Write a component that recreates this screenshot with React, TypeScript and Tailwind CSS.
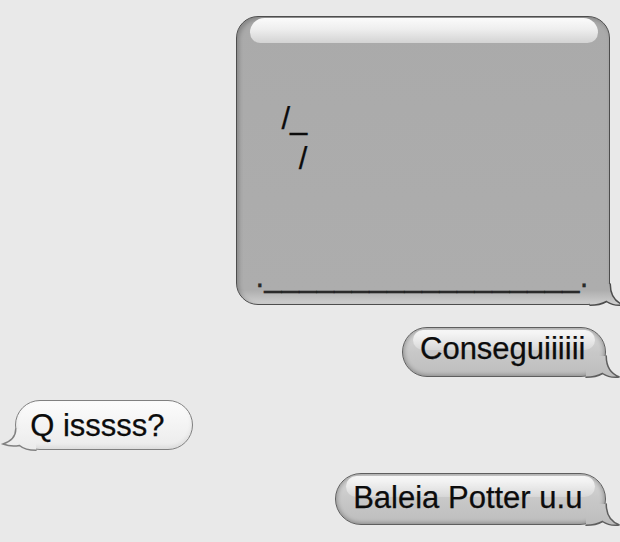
import React from "react";

type Stop = { o: number; c: string };

function Tail({
  side,
  h,
  stops,
  stroke,
  id,
}: {
  side: "left" | "right";
  h: number;
  stops: Stop[];
  stroke: string;
  id: string;
}) {
  const y1 = 34 - h + 1.5;
  const y2 = 32.5;
  const edgeR =
    "M20.25,12 C20.25,22 24,29.5 33.5,33 C28,33.8 21,32.5 16.5,29.5 C13,31.5 8,33.25 0,33.25";
  const edgeL =
    "M13.75,12 C13.75,19 10,24 1,27 C6,29 12,29.5 17.5,28.5 C21,31.5 26,33.25 34,33.25";
  const edge = side === "right" ? edgeR : edgeL;
  const fill = side === "right" ? edgeR + " L0,12 Z" : edgeL + " L34,12 Z";
  return (
    <svg
      width="34"
      height="34"
      viewBox="0 0 34 34"
      className={
        side === "right"
          ? "absolute right-[-14.5px] bottom-[-1.5px] overflow-visible"
          : "absolute left-[-14.5px] bottom-[-1.5px] overflow-visible"
      }
    >
      <defs>
        <linearGradient id={id} gradientUnits="userSpaceOnUse" x1="0" y1={y1} x2="0" y2={y2}>
          {stops.map((s, i) => (
            <stop key={i} offset={s.o} stopColor={s.c} />
          ))}
        </linearGradient>
      </defs>
      <path d={fill} fill={`url(#${id})`} />
      <path d={edge} fill="none" stroke={stroke} strokeWidth="1.5" strokeLinecap="round" />
    </svg>
  );
}

const graySmall: Stop[] = [
  { o: 0, c: "#d9d9d9" },
  { o: 0.5, c: "#c8c8c8" },
  { o: 1, c: "#bdbdbd" },
];
const whiteSmall: Stop[] = [
  { o: 0, c: "#fcfcfc" },
  { o: 1, c: "#ebebeb" },
];
const bigStops: Stop[] = [
  { o: 0, c: "#aaaaaa" },
  { o: 0.95, c: "#adadad" },
  { o: 0.99, c: "#c8c8c8" },
  { o: 1, c: "#cfcfcf" },
];

export default function App() {
  return (
    <div className="w-[620px] h-[542px] bg-[#e9e9e9] flex flex-col items-end gap-[23px] pt-[16px] pr-[10px] pl-[15px] overflow-hidden font-['Liberation_Sans',Arial,sans-serif] text-[#0c0c0c] [-webkit-text-stroke:0.25px_#0c0c0c]">
      {/* Big bubble */}
      <div className="relative mb-[-1px] w-[374px] h-[289px] rounded-[22px] border-[1.5px] border-[#4d4d4d] bg-[linear-gradient(to_bottom,#aaaaaa_0%,#adadad_95%,#c8c8c8_99%,#cfcfcf_100%)] shadow-[inset_2px_2px_4px_rgba(0,0,0,0.22)] flex flex-col pl-[18.5px]">
        <Tail side="right" h={289} stops={bigStops} stroke="#4d4d4d" id="tb" />
        <div className="absolute left-[13px] right-[11px] top-[1px] h-[25px] rounded-t-[18px] rounded-b-[13px] bg-[linear-gradient(to_bottom,#fbfbfb_0%,#eeeeee_45%,#d3d3d3_100%)]" />
        <div className="relative z-10 ml-[26px] mt-[81.75px] text-[31px] leading-[40px] whitespace-pre">
          <div>/_</div>
          <div>{"  /"}</div>
        </div>
        <div className="relative z-10 mt-[77.75px] text-[31px] leading-[40px] whitespace-pre text-[#2a2a2a]">
          <span>.</span>
          <span className="tracking-[0.3px]">{"__________________"}</span>
          <span>.</span>
        </div>
      </div>

      {/* Conseguiiiiii */}
      <div className="relative mr-[4px] w-[204px] h-[50px] rounded-[25px] border-[1.5px] border-[#5e5e5e] bg-[linear-gradient(to_bottom,#d9d9d9_0%,#c8c8c8_50%,#bdbdbd_100%)] shadow-[inset_0_0_4px_1px_rgba(0,0,0,0.28)] pl-[17px] pt-[1.25px]">
        <Tail side="right" h={50} stops={graySmall} stroke="#5e5e5e" id="t1" />
        <div className="absolute left-[10px] right-[10px] top-[1.5px] h-[20px] rounded-full bg-[linear-gradient(to_bottom,rgba(255,255,255,0.85)_0%,rgba(255,255,255,0.25)_100%)]" />
        <div className="relative z-10 text-[31px] leading-[40px] whitespace-nowrap">Conseguiiiiii</div>
      </div>

      {/* Q isssss? */}
      <div className="relative self-start w-[178px] h-[50px] rounded-[25px] border-[1.5px] border-[#808080] bg-[linear-gradient(to_bottom,#fcfcfc_0%,#ebebeb_100%)] shadow-[inset_0_-2px_4px_rgba(0,0,0,0.08)] pl-[14.2px] pt-[4.75px]">
        <Tail side="left" h={50} stops={whiteSmall} stroke="#808080" id="t2" />
        <div className="relative z-10 text-[31px] leading-[40px] whitespace-nowrap">Q isssss?</div>
      </div>

      {/* Baleia Potter u.u */}
      <div className="relative mr-[4px] w-[271px] h-[52px] rounded-[26px] border-[1.5px] border-[#5e5e5e] bg-[linear-gradient(to_bottom,#d9d9d9_0%,#c8c8c8_50%,#bdbdbd_100%)] shadow-[inset_0_0_4px_1px_rgba(0,0,0,0.28)] pl-[17.2px] pt-[3.75px]">
        <Tail side="right" h={52} stops={graySmall} stroke="#5e5e5e" id="t3" />
        <div className="absolute left-[10px] right-[10px] top-[1.5px] h-[21px] rounded-full bg-[linear-gradient(to_bottom,rgba(255,255,255,0.85)_0%,rgba(255,255,255,0.25)_100%)]" />
        <div className="relative z-10 text-[31px] leading-[40px] whitespace-nowrap">Baleia Potter u.u</div>
      </div>
    </div>
  );
}
